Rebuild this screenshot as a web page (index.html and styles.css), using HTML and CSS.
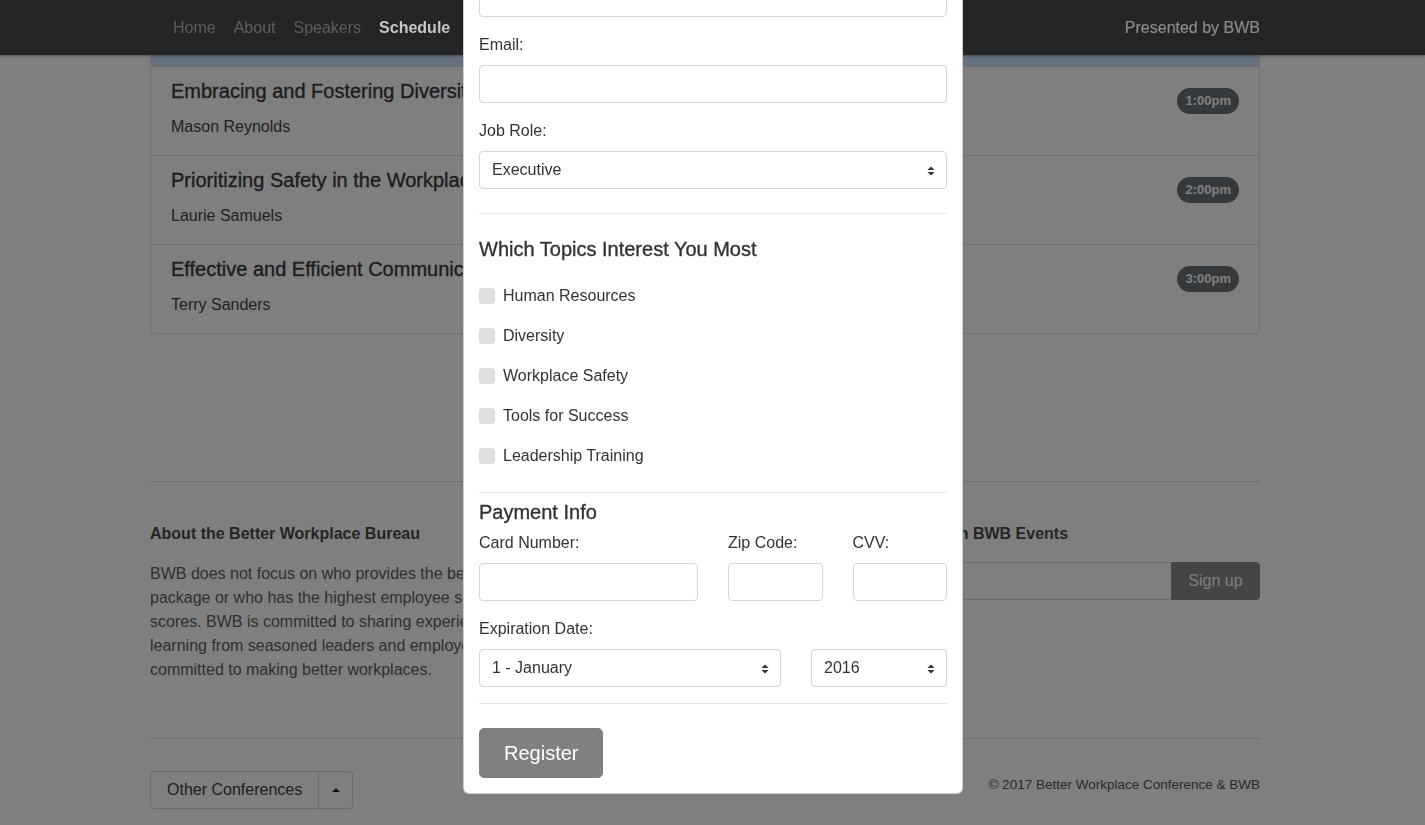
FILE: index.html
```html
<!DOCTYPE html>
<html lang="en">
<head>
<meta charset="utf-8">
<title>Better Workplace Conference - Schedule</title>
<link rel="stylesheet" href="styles.css">
</head>
<body>
<nav class="navbar">
  <div class="nav-inner">
    <ul class="nav-links">
      <li><a href="#">Home</a></li>
      <li><a href="#">About</a></li>
      <li><a href="#">Speakers</a></li>
      <li><a class="active" href="#">Schedule</a></li>
    </ul>
    <span class="nav-text">Presented by BWB</span>
  </div>
</nav>

<div class="page">
  <section class="container schedule">
    <ul class="list-group">
      <li class="list-item item-blue">
        <div>
          <h5 class="session-title">Networking Lunch</h5>
          <p class="speaker">All Attendees</p>
        </div>
        <span class="badge">12:00pm</span>
      </li>
      <li class="list-item">
        <div>
          <h5 class="session-title">Embracing and Fostering Diversity in the Workplace</h5>
          <p class="speaker">Mason Reynolds</p>
        </div>
        <span class="badge">1:00pm</span>
      </li>
      <li class="list-item">
        <div>
          <h5 class="session-title">Prioritizing Safety in the Workplace</h5>
          <p class="speaker">Laurie Samuels</p>
        </div>
        <span class="badge">2:00pm</span>
      </li>
      <li class="list-item">
        <div>
          <h5 class="session-title">Effective and Efficient Communication</h5>
          <p class="speaker">Terry Sanders</p>
        </div>
        <span class="badge">3:00pm</span>
      </li>
    </ul>
  </section>

  <footer class="container footer">
    <hr class="rule">
    <div class="footer-row">
      <div class="footer-col">
        <h6 class="footer-heading">About the Better Workplace Bureau</h6>
        <p class="footer-text">BWB does not focus on who provides the best benefits<br>package or who has the highest employee satisfaction<br>scores. BWB is committed to sharing experiences and<br>learning from seasoned leaders and employees who are<br>committed to making better workplaces.</p>
      </div>
      <div class="footer-col">
        <h6 class="footer-heading">Sign Up for the Latest News on BWB Events</h6>
        <form class="signup">
          <input class="signup-input" type="email" aria-label="Email address">
          <button class="signup-btn" type="button">Sign up</button>
        </form>
      </div>
    </div>
    <hr class="rule">
    <div class="footer-bottom">
      <div class="btn-group">
        <button class="btn-outline btn-main" type="button">Other Conferences</button>
        <button class="btn-outline btn-caret" type="button" aria-label="Toggle"><span class="caret-up"></span></button>
      </div>
      <p class="copyright">&copy; 2017 Better Workplace Conference &amp; BWB</p>
    </div>
  </footer>
</div>

<div class="backdrop"></div>

<div class="modal">
  <form class="modal-body">
    <div class="field">
      <label class="label">Name:</label>
      <input class="input" type="text">
    </div>
    <div class="field">
      <label class="label">Email:</label>
      <input class="input" type="email">
    </div>
    <div class="field">
      <label class="label">Job Role:</label>
      <div class="select-wrap">
        <select class="input select"><option>Executive</option><option>Manager</option><option>Employee</option></select>
        <svg class="select-arrow" viewBox="0 0 8 10" aria-hidden="true"><path d="M0.5 4 L4 0.5 L7.5 4 Z M0.5 6 L4 9.5 L7.5 6 Z"/></svg>
      </div>
    </div>

    <hr class="divider divider-a">

    <h5 class="modal-heading">Which Topics Interest You Most</h5>
    <label class="check"><span class="check-box"></span>Human Resources</label>
    <label class="check"><span class="check-box"></span>Diversity</label>
    <label class="check"><span class="check-box"></span>Workplace Safety</label>
    <label class="check"><span class="check-box"></span>Tools for Success</label>
    <label class="check"><span class="check-box"></span>Leadership Training</label>

    <hr class="divider divider-b">

    <h5 class="modal-heading payment">Payment Info</h5>
    <div class="pay-row field">
      <div>
        <label class="label">Card Number:</label>
        <input class="input" type="text">
      </div>
      <div>
        <label class="label">Zip Code:</label>
        <input class="input" type="text">
      </div>
      <div>
        <label class="label">CVV:</label>
        <input class="input" type="text">
      </div>
    </div>
    <div class="field">
      <label class="label">Expiration Date:</label>
      <div class="exp-row">
        <div class="select-wrap">
          <select class="input select"><option>1 - January</option><option>2 - February</option></select>
          <svg class="select-arrow" viewBox="0 0 8 10" aria-hidden="true"><path d="M0.5 4 L4 0.5 L7.5 4 Z M0.5 6 L4 9.5 L7.5 6 Z"/></svg>
        </div>
        <div class="select-wrap">
          <select class="input select"><option>2016</option><option>2017</option></select>
          <svg class="select-arrow" viewBox="0 0 8 10" aria-hidden="true"><path d="M0.5 4 L4 0.5 L7.5 4 Z M0.5 6 L4 9.5 L7.5 6 Z"/></svg>
        </div>
      </div>
    </div>

    <hr class="divider divider-c">

    <button class="register" type="button">Register</button>
  </form>
</div>
</body>
</html>
```

FILE: styles.css
```css
* { box-sizing: border-box; }

html, body {
  margin: 0;
}

body {
  font-family: "Liberation Sans", Arial, Helvetica, sans-serif;
  font-size: 16px;
  line-height: 1.5;
  color: #333;
  background: #fff;
  padding-right: 15px;
  height: 825px;
  overflow: hidden;
}

/* Navbar */
.navbar {
  position: fixed;
  top: 0;
  left: 0;
  right: 0;
  height: 55px;
  padding-right: 15px;
  background: #242526;
  box-shadow: 0 1px 2px rgba(0, 0, 0, 0.35);
  z-index: 1045;
}

.nav-inner {
  width: 1110px;
  height: 100%;
  margin: 0 auto;
  display: flex;
  align-items: center;
  justify-content: space-between;
}

.nav-links {
  list-style: none;
  display: flex;
  margin: 0 0 0 14px;
  padding: 0;
}

.nav-links a {
  display: block;
  padding: 8px 9px;
  color: #5d5e5f;
  text-decoration: none;
}

.nav-links a.active {
  color: #c6c6c6;
  font-weight: bold;
}

.nav-text {
  color: #8b8b8b;
  -webkit-text-stroke: 0.2px #8b8b8b;
}

/* Page (scrolled) */
.page {
  margin-top: -23px;
}

.container {
  width: 1110px;
  margin: 0 auto;
}

.schedule {
  margin-bottom: 147px;
}

.list-group {
  list-style: none;
  margin: 0;
  padding: 0;
  border: 1px solid #dedede;
  border-radius: 4px;
}

.list-item {
  display: flex;
  justify-content: space-between;
  align-items: flex-start;
  padding: 12px 20px;
}

.list-item + .list-item {
  border-top: 1px solid #dedede;
}

.item-blue {
  background: #cce5ff;
}

.session-title {
  margin: 0 0 12px;
  font-size: 20px;
  font-weight: 500;
  line-height: 24px;
  color: #3a3a3a;
  -webkit-text-stroke: 0.35px #3a3a3a;
}

.speaker {
  margin: 0 0 4px;
  line-height: 24px;
  color: #444;
}

.badge {
  margin-top: 9px;
  padding: 6px 8px;
  border-radius: 13px;
  background: #6c7277;
  color: #fff;
  font-size: 13px;
  font-weight: bold;
  line-height: 14px;
}

/* Footer */
.rule {
  border: 0;
  border-top: 1px solid #dcdcdc;
  margin: 0;
}

.footer-row {
  display: grid;
  grid-template-columns: 552px 1fr;
  column-gap: 30px;
  padding: 40px 0;
}

.footer-heading {
  margin: 0 0 16px;
  font-size: 16px;
  font-weight: bold;
  line-height: 24px;
  color: #4a4a4a;
}

.footer-text {
  margin: 0 0 16px;
  color: #5e5e5e;
}

.signup {
  display: flex;
  height: 38px;
}

.signup-input {
  flex: 1;
  min-width: 0;
  border: 1px solid #d4d4d4;
  border-right: 0;
  border-radius: 4px 0 0 4px;
  background: #fff;
}

.signup-btn {
  width: 89px;
  border: 1px solid #8a8a8a;
  border-radius: 0 4px 4px 0;
  background: #8a8a8a;
  color: #fff;
  font: inherit;
  line-height: 24px;
  padding: 0;
}

.footer-bottom {
  display: flex;
  justify-content: space-between;
  align-items: flex-start;
  padding-top: 32px;
}

.btn-group {
  display: flex;
}

.btn-outline {
  height: 38px;
  border: 1px solid #d6d6d6;
  background: transparent;
  color: #3c3c3c;
  font: inherit;
  line-height: 24px;
}

.btn-main {
  padding: 6px 16px;
  border-radius: 4px 0 0 4px;
}

.btn-caret {
  width: 34px;
  padding: 0;
  border-left: 0;
  border-radius: 0 4px 4px 0;
  display: flex;
  align-items: center;
  justify-content: center;
}

.caret-up {
  width: 0;
  height: 0;
  border-left: 4.5px solid transparent;
  border-right: 4.5px solid transparent;
  border-bottom: 4.5px solid #222;
}

.copyright {
  margin: 4px 0 0;
  font-size: 13.5px;
  color: #555;
}

/* Backdrop + modal */
.backdrop {
  position: fixed;
  top: 0;
  left: 0;
  right: 0;
  bottom: 0;
  background: rgba(0, 0, 0, 0.5);
  z-index: 1040;
}

.modal {
  position: fixed;
  top: -69px;
  left: 463px;
  width: 500px;
  background: #fff;
  border: 1px solid rgba(0, 0, 0, 0.2);
  border-radius: 6px;
  z-index: 1050;
}

.modal-body {
  margin: 0;
  padding: 15px;
}

.field {
  margin-bottom: 16px;
}

.label {
  display: block;
  margin-bottom: 8px;
  line-height: 24px;
  color: #333;
}

.input {
  display: block;
  width: 100%;
  height: 38px;
  margin: 0;
  padding: 6px 12px;
  border: 1px solid #d6d6d6;
  border-radius: 4px;
  background: #fff;
  color: #333;
  font: inherit;
  line-height: 24px;
}

.select-wrap {
  position: relative;
}

.select {
  -webkit-appearance: none;
  appearance: none;
}

.select-arrow {
  position: absolute;
  right: 12px;
  top: 15px;
  width: 8px;
  height: 10px;
  fill: #333;
  pointer-events: none;
}

.divider {
  border: 0;
  border-top: 1px solid #e6e6e6;
}

.divider-a { margin: 24px 0 23px; }
.divider-b { margin: 24px 0 7px; }
.divider-c { margin: 0 0 24px; }

.modal-heading {
  margin: 0 0 23px;
  font-size: 20px;
  font-weight: 500;
  line-height: 24px;
  color: #333;
  -webkit-text-stroke: 0.35px #333;
}

.modal-heading.payment {
  margin-bottom: 7px;
}

.check {
  display: flex;
  align-items: center;
  gap: 8px;
  margin-bottom: 16px;
  line-height: 24px;
  color: #333;
}

.check-box {
  width: 16px;
  height: 16px;
  border-radius: 4px;
  background: #dedede;
}

.pay-row {
  display: grid;
  grid-template-columns: 219px 1fr 1fr;
  column-gap: 30px;
}

.exp-row {
  display: grid;
  grid-template-columns: 302px 1fr;
  column-gap: 30px;
}

.register {
  display: block;
  padding: 9px 24px;
  border: 1px solid #808080;
  border-radius: 5px;
  background: #808080;
  color: #fff;
  font: inherit;
  font-size: 20px;
  line-height: 30px;
}
```
